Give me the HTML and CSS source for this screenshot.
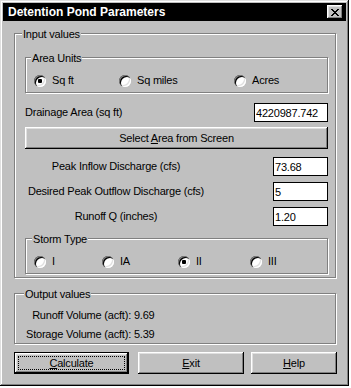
FILE: index.html
```html
<!DOCTYPE html>
<html lang="en">
<head>
    <meta charset="UTF-8">
    <title>Detention Pond Parameters</title>
    <link rel="stylesheet" href="styles.css">
</head>
<body>
    <div class="window">
        <div class="titlebar">
            <span class="title">Detention Pond Parameters</span>
            <button class="close-btn" aria-label="Close">
                <svg width="8" height="7" viewBox="0 0 8 7" shape-rendering="crispEdges">
                    <path d="M0 0h2v1h-2zM6 0h2v1h-2zM1 1h2v1h-2zM5 1h2v1h-2zM2 2h4v1h-4zM3 3h2v1h-2zM2 4h4v1h-4zM1 5h2v1h-2zM5 5h2v1h-2zM0 6h2v1h-2zM6 6h2v1h-2z" fill="#000"/>
                </svg>
            </button>
        </div>
        <div class="client">
            <div class="group input-group">
                <span class="group-label">Input values</span>
                <div class="group sub-group units">
                    <span class="group-label">Area Units</span>
                    <div class="radio-row">
                        <label class="option w85"><span class="radio checked"></span>Sq ft</label>
                        <label class="option w115"><span class="radio"></span>Sq miles</label>
                        <label class="option"><span class="radio"></span>Acres</label>
                    </div>
                </div>
                <div class="field-row drainage">
                    <span class="field-label">Drainage Area (sq ft)</span>
                    <input class="field wide-field" type="text" value="4220987.742">
                </div>
                <button class="btn select-btn">Select <u>A</u>rea from Screen</button>
                <div class="field-row first">
                    <span class="field-label centered">Peak Inflow Discharge (cfs)</span>
                    <input class="field short-field" type="text" value="73.68">
                </div>
                <div class="field-row">
                    <span class="field-label centered">Desired Peak Outflow Discharge (cfs)</span>
                    <input class="field short-field" type="text" value="5">
                </div>
                <div class="field-row">
                    <span class="field-label centered">Runoff Q (inches)</span>
                    <input class="field short-field" type="text" value="1.20">
                </div>
                <div class="group sub-group storm">
                    <span class="group-label">Storm Type</span>
                    <div class="radio-row">
                        <label class="option w68"><span class="radio"></span>I</label>
                        <label class="option w76"><span class="radio"></span>IA</label>
                        <label class="option w72"><span class="radio checked"></span>II</label>
                        <label class="option"><span class="radio"></span>III</label>
                    </div>
                </div>
            </div>
            <div class="group output-group">
                <span class="group-label">Output values</span>
                <div class="results">
                    <div>Runoff Volume (acft): 9.69</div>
                    <div>Storage Volume (acft): 5.39</div>
                </div>
            </div>
            <div class="button-row">
                <button class="btn default calc-btn"><span class="focus"><u>C</u>alculate</span></button>
                <button class="btn exit-btn"><u>E</u>xit</button>
                <button class="btn help-btn"><u>H</u>elp</button>
            </div>
        </div>
    </div>
</body>
</html>
```

FILE: styles.css
```css
/* Win95 style dialog */
* {
    box-sizing: border-box;
}
body {
    margin: 0;
    background: #fff;
    font-family: "Liberation Sans", Arial, sans-serif;
    font-size: 11px;
    letter-spacing: -0.2px;
    color: #000;
}
.window {
    width: 349px;
    height: 386px;
    padding: 3px;
    background: #c0c0c0;
    box-shadow: inset -1px -1px #000, inset 1px 1px #dfdfdf, inset -2px -2px #808080, inset 2px 2px #fff;
}
.titlebar {
    height: 18px;
    padding: 0 3px 0 5px;
    display: flex;
    align-items: center;
    justify-content: space-between;
    background: #000;
    color: #fff;
    font-size: 12px;
    font-weight: bold;
    letter-spacing: 0;
}
.close-btn {
    width: 16px;
    height: 14px;
    padding: 0;
    border: none;
    display: flex;
    align-items: center;
    justify-content: center;
    background: #c0c0c0;
    box-shadow: inset -1px -1px #000, inset 1px 1px #fff, inset -2px -2px #808080, inset 2px 2px #dfdfdf;
}
.client {
    padding: 12px 0 0 11px;
}

/* group boxes */
.group {
    position: relative;
    border: 1px solid #808080;
    box-shadow: inset 1px 1px #fff, 1px 1px #fff;
}
.group-label {
    position: absolute;
    top: -6px;
    left: 7px;
    padding: 0 1px;
    line-height: 13px;
    background: #c0c0c0;
}
.input-group {
    width: 322px;
    padding: 23px 7px 3px 10px;
}
.sub-group {
    height: 36px;
    padding: 16px 0 0 8px;
}
.units .group-label {
    left: 5px;
}
.storm {
    margin-top: 12px;
}
.storm .group-label {
    left: 6px;
}
.radio-row {
    display: flex;
    align-items: center;
    height: 13px;
    line-height: 13px;
}
.option {
    display: flex;
    align-items: center;
}
.w85 { width: 85px; }
.w115 { width: 115px; }
.w68 { width: 68px; }
.w76 { width: 76px; }
.w72 { width: 72px; }
.radio {
    position: relative;
    flex: none;
    width: 12px;
    height: 12px;
    margin-right: 6px;
    border-radius: 50%;
    background: #fff;
    box-shadow: inset 1px 1px #808080, inset 2px 2px #000, inset -1px -1px #fff, inset -2px -2px #dfdfdf;
}
.radio.checked::after {
    content: "";
    position: absolute;
    left: 4px;
    top: 4px;
    width: 4px;
    height: 4px;
    border-radius: 1px;
    background: #000;
}

/* edit rows */
.field-row {
    display: flex;
    align-items: center;
    height: 19px;
    margin-top: 6px;
    line-height: 13px;
}
.field-row.drainage {
    margin-top: 10px;
}
.field-row.first {
    margin-top: 8px;
}
.field-label.centered {
    width: 182px;
    text-align: center;
}
.field {
    height: 19px;
    margin-left: auto;
    padding: 0 1px;
    border: 1px solid #000;
    background: #fff;
    font-family: inherit;
    font-size: 11px;
    letter-spacing: -0.2px;
    color: #000;
    outline: none;
}
.wide-field {
    width: 74px;
}
.short-field {
    width: 55px;
}

/* buttons */
.btn {
    height: 22px;
    padding: 0;
    border: none;
    background: #c0c0c0;
    font-family: inherit;
    font-size: 11px;
    letter-spacing: -0.2px;
    color: #000;
    box-shadow: inset -1px -1px #000, inset 1px 1px #fff, inset -2px -2px #808080, inset 2px 2px #dfdfdf;
}
.select-btn {
    display: block;
    width: 100%;
    margin-top: 5px;
}
.btn.default {
    padding: 4px;
    box-shadow: inset 0 0 0 1px #000, inset -2px -2px #000, inset 2px 2px #fff, inset -3px -3px #808080, inset 3px 3px #dfdfdf;
}
.focus {
    display: flex;
    align-items: center;
    justify-content: center;
    height: 100%;
    border: 1px dotted #000;
}

/* output */
.output-group {
    width: 322px;
    height: 51px;
    margin-top: 15px;
    padding: 15px 0 0 11px;
}
.output-group .group-label {
    left: 9px;
}
.results {
    display: inline-flex;
    flex-direction: column;
    align-items: flex-end;
    gap: 6px;
    line-height: 13px;
}
.button-row {
    display: flex;
    margin-top: 8px;
}
.calc-btn {
    width: 115px;
}
.exit-btn {
    width: 106px;
    margin-left: 9px;
}
.help-btn {
    width: 86px;
    margin-left: 7px;
}
```
